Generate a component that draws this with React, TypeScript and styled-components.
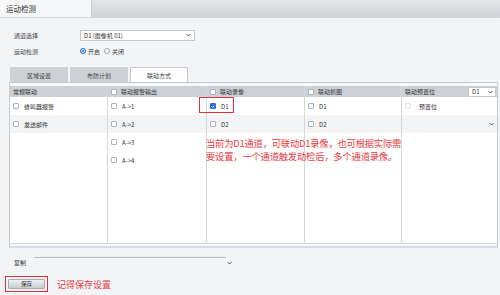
import React from "react";
import styled, { createGlobalStyle, css } from "styled-components";

const Global = createGlobalStyle`
  html, body { margin: 0; padding: 0; }
  body {
    width: 500px; height: 295px; overflow: hidden;
    background: #f3f4f6;
    font-family: "Noto Sans CJK SC", "Noto Sans", sans-serif;
    color: #333;
  }
`;

const Page = styled.div`
  width: 500px; height: 295px; display: flex; flex-direction: column; background: #f3f4f6;
`;

const TopBar = styled.div`
  height: 17px; display: flex; border-bottom: 1px solid #d3d6da;
  background: linear-gradient(#e4e6e9, #cfd2d6);
`;
const TopTab = styled.div`
  width: 92px; background: #f6f7f9; border-right: 1px solid #c9ccd1;
  font-size: 7.5px; line-height: 17px; padding-left: 6px; box-sizing: border-box; color: #333;
`;

const Form = styled.div`
  display: flex; flex-direction: column; padding: 9px 0 0 0;
`;
const FormRow = styled.div`
  height: 16px; display: flex; align-items: center; padding-left: 14px;
`;
const Label = styled.span`
  width: 66px; font-size: 6px; color: #444;
`;
const SelectBox = styled.div<{ $w: number }>`
  width: ${p => p.$w}px; height: 11px; box-sizing: border-box; border: 1px solid #c5c9ce; background: #fff;
  display: flex; align-items: center; justify-content: space-between; padding: 0 3px;
  font-size: 6px; color: #333;
`;
const Chev = () => (
  <svg width="5" height="4" viewBox="0 0 5 4" style={{ display: "block" }}><path d="M0.5 1 L2.5 3 L4.5 1" fill="none" stroke="#555" strokeWidth="1" /></svg>
);
const RadioGroup = styled.div`display: flex; align-items: center; gap: 4px; font-size: 6px;`;
const Radio = styled.span<{ $on?: boolean }>`
  width: 6px; height: 6px; border-radius: 50%; box-sizing: border-box; margin-right: 1px;
  border: 1px solid ${p => (p.$on ? "#2a6fd6" : "#9aa0a6")}; background: #fff; display: inline-block;
  ${p => p.$on && css`box-shadow: inset 0 0 0 1px #fff; background: #2a6fd6;`}
`;
const RadioItem = styled.label`display: flex; align-items: center; gap: 1px;`;

const Tabs = styled.div`
  display: flex; gap: 2px; margin: 8px 0 0 10px; height: 15px;
`;
const Tab = styled.div<{ $active?: boolean }>`
  width: 58px; box-sizing: border-box; font-size: 6px; text-align: center; line-height: 15px;
  background: ${p => (p.$active ? "#fdfdfd" : "#cdd0d5")};
  border: 1px solid ${p => (p.$active ? "#c6c9ce" : "#cdd0d5")};
  border-bottom: none; color: #444;
`;
const TabBody = styled.div`
  margin: 0 2px 0 9px; border: 1px solid #c6c9ce; border-bottom: 2px solid #d8dbdf; background: #f7f8f9;
  padding: 3px 0 2px 0;
`;
const Table = styled.div`
  position: relative; height: 157px; display: grid;
  grid-template-columns: 98px 99px 98px 97px 1fr; background: #fff;
  border-bottom: 1px solid #d4d7db;
`;
const Column = styled.div<{ $last?: boolean }>`
  display: flex; flex-direction: column; border-right: ${p => (p.$last ? "none" : "1px solid #d4d7db")};
`;
const Head = styled.div`
  height: 11px; background: #cdd0d5; display: flex; align-items: center; padding-left: 3px; gap: 3px;
  font-size: 6px; color: #333; justify-content: space-between;
`;
const HeadLeft = styled.div`display: flex; align-items: center; gap: 4px;`;
const Cell = styled.div<{ $striped?: boolean }>`
  height: 18px; display: flex; align-items: center; gap: 5px; padding-left: 3px;
  background: ${p => (p.$striped ? "#f2f3f5" : "#fff")}; font-size: 6px; color: #333;
`;
const Box = styled.span<{ $on?: boolean; $faint?: boolean }>`
  width: 6px; height: 6px; box-sizing: border-box; border-radius: 1px; display: inline-flex;
  align-items: center; justify-content: center; flex: none;
  border: 1px solid ${p => (p.$on ? "#2a6fd6" : p.$faint ? "#e2e4e7" : "#aeb3b9")};
  background: ${p => (p.$on ? "#2a6fd6" : "#fff")};
`;
const Check = ({ on, faint }: { on?: boolean; faint?: boolean }) => (
  <Box $on={on} $faint={faint}>
    {on && (
      <svg width="5" height="5" viewBox="0 0 5 5"><path d="M0.8 2.6 L2 3.8 L4.2 1.2" fill="none" stroke="#fff" strokeWidth="1" /></svg>
    )}
  </Box>
);
const PresetLabel = styled.span`margin-left: 3px;`;
const MiniSelect = styled.div`
  width: 28px; height: 10px; box-sizing: border-box; border: 1px solid #c5c9ce; background: #fff;
  display: flex; align-items: center; justify-content: space-between; padding: 0 2px 0 3px; margin-right: 1px;
  font-size: 6px;
`;
const BarSelect = styled.div`
  height: 18px; background: #f2f3f5; display: flex; align-items: center; justify-content: flex-end; padding-right: 3px;
`;
const Highlight = styled.div`
  position: absolute; left: 189px; top: 11px; width: 35px; height: 16px;
  border: 1px solid #e0313b; box-sizing: border-box; pointer-events: none;
`;
const Note = styled.div`
  position: absolute; left: 196px; top: 51px; width: 200px;
  font-size: 9.3px; line-height: 13px; color: #e53a43; letter-spacing: -0.2px;
`;

const Bottom = styled.div`
  display: flex; flex-direction: column; padding: 9px 0 0 0;
`;
const CopyRow = styled.div`display: flex; align-items: flex-start; height: 16px; padding-left: 14px;`;
const CopyLabel = styled.span`font-size: 6px; line-height: 8px; margin-top: 2px; color: #333;`;
const CopyLine = styled.div`
  width: 192px; height: 8px; border-top: 1px solid #b9bdc2; margin-left: 8px;
`;
const CopyChev = styled.div`display: flex; margin-top: 4px; margin-left: 1px;`;
const SaveRow = styled.div`display: flex; align-items: center; gap: 9px; padding-left: 5px; margin-top: 3px;`;
const SaveFrame = styled.div`
  border: 1px solid #e0313b; padding: 2px; width: 43px; height: 16px; box-sizing: border-box; display: flex;
`;
const SaveButton = styled.button`
  flex: 1; height: 10px; margin: 0; padding: 0; font-family: inherit; font-size: 5.5px; line-height: 7px; color: #333;
  border: 1px solid #a9adb2; border-radius: 1px; background: linear-gradient(#eef0f2, #c9ccd1);
`;
const SaveNote = styled.span`font-size: 9px; color: #e53a43;`;

export default function App() {
  return (
    <Page>
      <Global />
      <TopBar>
        <TopTab>运动检测</TopTab>
      </TopBar>
      <Form>
        <FormRow>
          <Label>通道选择</Label>
          <SelectBox $w={115}>
            <span>D1 (摄像机 01)</span>
            <Chev />
          </SelectBox>
        </FormRow>
        <FormRow>
          <Label>运动检测</Label>
          <RadioGroup>
            <RadioItem><Radio $on />开启</RadioItem>
            <RadioItem><Radio />关闭</RadioItem>
          </RadioGroup>
        </FormRow>
      </Form>
      <Tabs>
        <Tab>区域设置</Tab>
        <Tab>布防计划</Tab>
        <Tab $active>联动方式</Tab>
      </Tabs>
      <TabBody>
        <Table>
          <Column>
            <Head><HeadLeft>常规联动</HeadLeft></Head>
            <Cell><Check />蜂鸣器报警</Cell>
            <Cell $striped><Check />发送邮件</Cell>
          </Column>
          <Column>
            <Head><HeadLeft><Check />联动报警输出</HeadLeft></Head>
            <Cell><Check />A-&gt;1</Cell>
            <Cell $striped><Check />A-&gt;2</Cell>
            <Cell><Check />A-&gt;3</Cell>
            <Cell><Check />A-&gt;4</Cell>
          </Column>
          <Column>
            <Head><HeadLeft><Check />联动录像</HeadLeft></Head>
            <Cell><Check on />D1</Cell>
            <Cell $striped><Check />D2</Cell>
          </Column>
          <Column>
            <Head><HeadLeft><Check />联动抓图</HeadLeft></Head>
            <Cell><Check />D1</Cell>
            <Cell $striped><Check />D2</Cell>
          </Column>
          <Column $last>
            <Head>
              <HeadLeft>联动预置位</HeadLeft>
              <MiniSelect><span>D1</span><Chev /></MiniSelect>
            </Head>
            <Cell><Check faint /><PresetLabel>预置位</PresetLabel></Cell>
            <BarSelect><Chev /></BarSelect>
          </Column>
          <Highlight />
          <Note>当前为D1通道，可联动D1录像，也可根据实际需要设置，一个通道触发动检后，多个通道录像。</Note>
        </Table>
      </TabBody>
      <Bottom>
        <CopyRow>
          <CopyLabel>复制</CopyLabel>
          <CopyLine />
          <CopyChev><Chev /></CopyChev>
        </CopyRow>
        <SaveRow>
          <SaveFrame><SaveButton>保存</SaveButton></SaveFrame>
          <SaveNote>记得保存设置</SaveNote>
        </SaveRow>
      </Bottom>
    </Page>
  );
}
